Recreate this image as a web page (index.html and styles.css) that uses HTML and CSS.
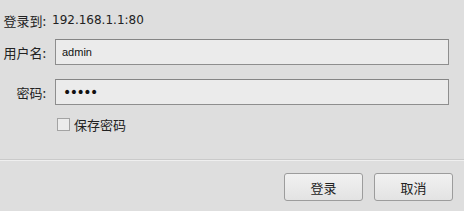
FILE: index.html
```html
<!DOCTYPE html>
<html lang="zh-CN">
<head>
    <meta charset="UTF-8">
    <title>登录</title>
    <link rel="stylesheet" href="styles.css">
</head>
<body>
    <div class="login-form">
        <div class="row info">
            <span class="label">登录到:</span>
            <span class="value">192.168.1.1:80</span>
        </div>
        <div class="row">
            <label class="label" for="username">用户名:</label>
            <input type="text" id="username" value="admin">
        </div>
        <div class="row">
            <label class="label" for="password">密码:</label>
            <input type="password" id="password" value="admin">
        </div>
        <div class="row check">
            <span class="box"></span>
            <span class="check-text">保存密码</span>
        </div>
    </div>
    <div class="footer">
        <button type="submit">登录</button>
        <button type="button">取消</button>
    </div>
</body>
</html>
```

FILE: styles.css
```css
body {
    margin: 0;
    padding: 0;
    width: 464px;
    height: 211px;
    overflow: hidden;
    background-color: #dedede;
    color: #222;
    font-family: "Noto Sans CJK SC", sans-serif;
    font-size: 13px;
}
.login-form {
    padding-top: 7px;
    height: 159px;
    box-sizing: border-box;
}
.row {
    display: flex;
    align-items: center;
    height: 26px;
    margin-bottom: 14px;
}
.row.info {
    margin-bottom: 6px;
}
.label {
    width: 46px;
    margin-right: 9px;
    text-align: right;
    flex-shrink: 0;
}
.info .label {
    margin-right: 6px;
}
.value {
    font-family: "DejaVu Sans", sans-serif;
    font-size: 12px;
}
.row input {
    width: 394px;
    height: 26px;
    box-sizing: border-box;
    margin: 0;
    padding: 0 6px;
    border: 1px solid #8e8e8e;
    border-top-color: #858585;
    background: #ebebeb;
    color: #111;
    font-family: "Liberation Sans", sans-serif;
    font-size: 11px;
    outline: none;
}
.row input[type="password"] {
    font-family: "DejaVu Sans", sans-serif;
    font-size: 14px;
    letter-spacing: -1.5px;
    padding-left: 7px;
}
.row.check {
    height: 13px;
    margin-top: -1px;
    padding-left: 57px;
}
.box {
    width: 13px;
    height: 13px;
    box-sizing: border-box;
    border: 1px solid #a3a3a3;
    background: #ececec;
    margin-right: 4px;
}
.footer {
    height: 52px;
    box-sizing: border-box;
    border-top: 1px solid #cacaca;
    box-shadow: inset 0 1px 0 #efefef;
    padding: 13px 11px 0 0;
    display: flex;
    justify-content: flex-end;
    align-items: flex-start;
    gap: 11px;
}
.footer button {
    width: 79px;
    height: 28px;
    border: 1px solid #9c9c9c;
    border-radius: 3px;
    background: linear-gradient(#f1f1f1, #e3e3e3);
    color: #222;
    font-family: "Noto Sans CJK SC", sans-serif;
    font-size: 13px;
    padding: 0;
}
```
